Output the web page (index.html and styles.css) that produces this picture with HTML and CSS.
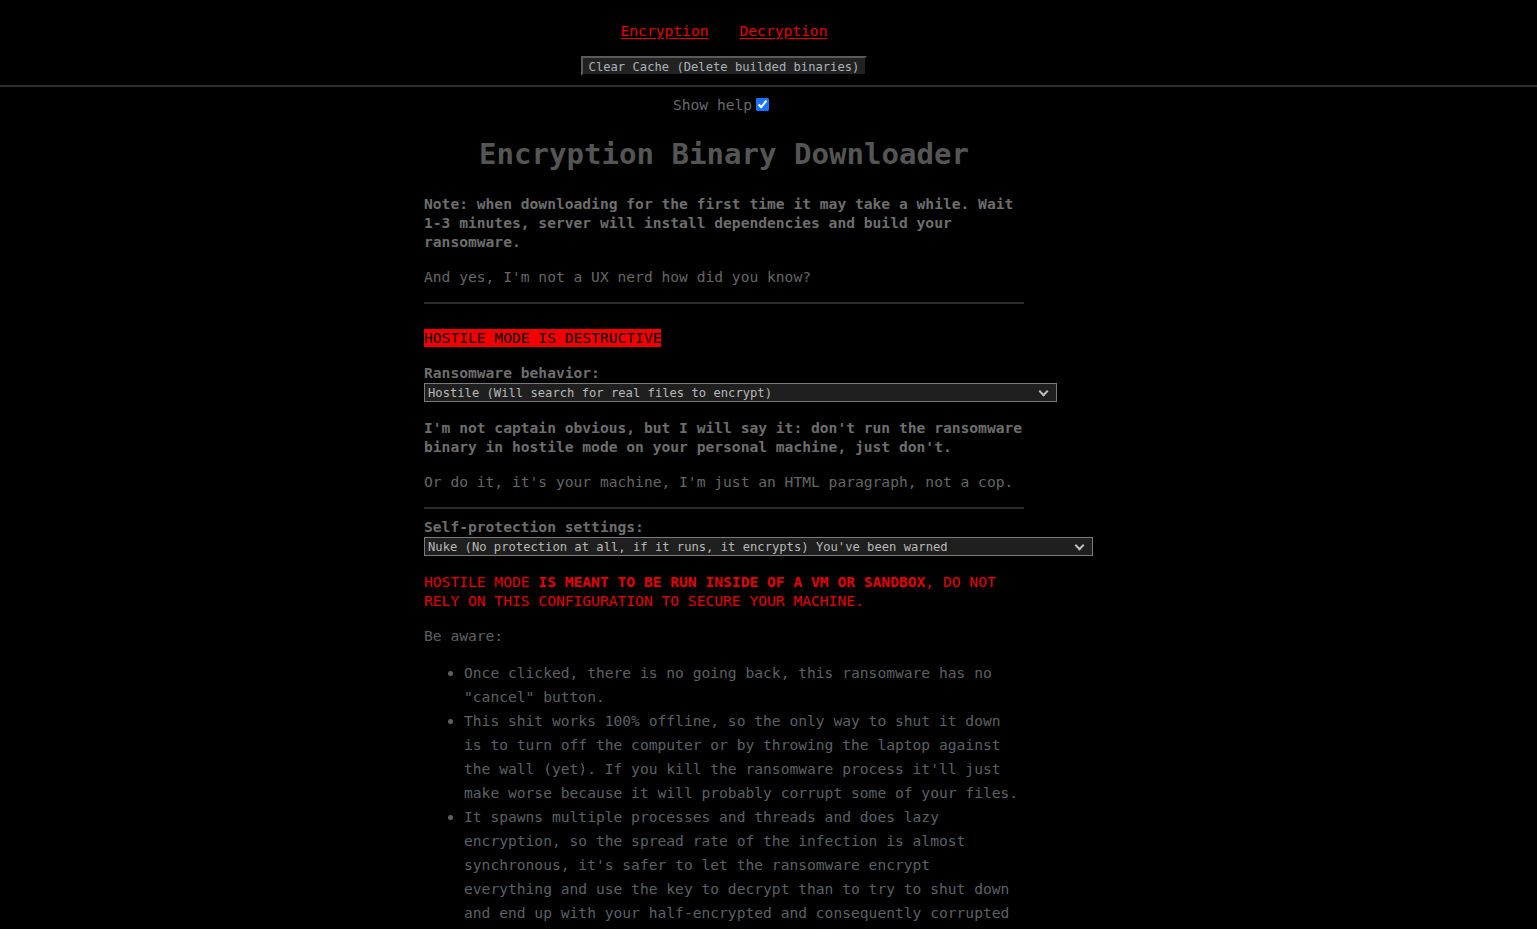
FILE: index.html
```html
<!DOCTYPE html>
<html lang="en">
<head>
<meta charset="utf-8">
<title>Encryption Binary Downloader</title>
<link rel="stylesheet" href="styles.css">
</head>
<body>
<header class="topbar">
  <div class="page">
    <nav class="nav">
      <a href="#" class="nav-link">Encryption</a>
      <a href="#" class="nav-link">Decryption</a>
    </nav>
    <div class="btn-row">
      <button class="btn" type="button">Clear Cache (Delete builded binaries)</button>
    </div>
  </div>
</header>
<div class="page">
  <div class="help-row">
    <label class="help-label">Show help<input type="checkbox" class="help-check" checked></label>
  </div>
  <h1 class="title">Encryption Binary Downloader</h1>
  <main class="content">
    <p class="strong">Note: when downloading for the first time it may take a while. Wait 1-3 minutes, server will install dependencies and build your ransomware.</p>
    <p>And yes, I'm not a UX nerd how did you know?</p>
    <hr class="rule">
    <p class="badge-row"><span class="badge">HOSTILE MODE IS DESTRUCTIVE</span></p>
    <label class="field-label">Ransomware behavior:</label>
    <div class="select-wrap sel-behavior">
      <select class="select">
        <option>Hostile (Will search for real files to encrypt)</option>
        <option>Safe (Will create a sandbox folder with dummy files to encrypt)</option>
      </select>
    </div>
    <p class="strong">I'm not captain obvious, but I will say it: don't run the ransomware binary in hostile mode on your personal machine, just don't.</p>
    <p>Or do it, it's your machine, I'm just an HTML paragraph, not a cop.</p>
    <hr class="rule rule-tight">
    <label class="field-label">Self-protection settings:</label>
    <div class="select-wrap sel-protect">
      <select class="select">
        <option>Nuke (No protection at all, if it runs, it encrypts) You've been warned</option>
      </select>
    </div>
    <p class="danger">HOSTILE MODE <b>IS MEANT TO BE RUN INSIDE OF A VM OR SANDBOX</b>, DO NOT RELY ON THIS CONFIGURATION TO SECURE YOUR MACHINE.</p>
    <p class="muted">Be aware:</p>
    <ul class="list">
      <li>Once clicked, there is no going back, this ransomware has no "cancel" button.</li>
      <li>This shit works 100% offline, so the only way to shut it down is to turn off the computer or by throwing the laptop against the wall (yet). If you kill the ransomware process it'll just make worse because it will probably corrupt some of your files.</li>
      <li>It spawns multiple processes and threads and does lazy encryption, so the spread rate of the infection is almost synchronous, it's safer to let the ransomware encrypt everything and use the key to decrypt than to try to shut down and end up with your half-encrypted and consequently corrupted files.</li>
    </ul>
  </main>
</div>
</body>
</html>
```
FILE: styles.css
```css
html, body {
  background: #000;
}
body {
  margin: 0;
  font-family: "DejaVu Sans Mono", "Liberation Mono", monospace;
  font-size: 14.62px;
  line-height: 19px;
  color: #666;
}
.page {
  width: 1448px;
}
.topbar {
  border-bottom: 2px solid #2e2e2e;
  padding-top: 21px;
  padding-bottom: 9px;
}
.nav {
  display: flex;
  justify-content: center;
  gap: 31px;
  height: 19px;
}
.nav-link {
  color: #e80000;
  text-decoration: underline;
  text-underline-offset: 2px;
}
.btn-row {
  display: flex;
  justify-content: center;
  margin-top: 16px;
}
.btn {
  font-family: "DejaVu Sans Mono", "Liberation Mono", monospace;
  font-size: 12.16px;
  line-height: 14px;
  height: 20px;
  padding: 2px 6px 0;
  color: #a9b2ba;
  background: #222;
  border: 2px outset #5a5a5a;
  border-right-color: #3a3a3a;
  border-bottom-color: #3a3a3a;
}
.help-row {
  display: flex;
  justify-content: center;
  margin-top: 8px;
}
.help-label {
  display: flex;
  align-items: center;
  color: #6a6a6a;
  line-height: 19px;
  margin-left: -6px;
}
.help-check {
  margin: 0 0 0 4px;
  width: 13px;
  height: 13px;
  accent-color: #1a73ff;
}
.title {
  text-align: center;
  font-size: 29.07px;
  line-height: 38px;
  font-weight: bold;
  color: #555;
  margin: 21px 0 21px;
}
.content {
  width: 600px;
  margin: 0 auto;
}
p {
  margin: 16px 0;
}
.content > p:first-child {
  margin-top: 0;
}
.strong {
  font-weight: bold;
  color: #6e6e6e;
}
.rule {
  border: 0;
  border-top: 2px solid #2c2c2c;
  margin: 0;
  height: 0;
}
.badge-row {
  margin: 25px 0 16px;
  line-height: 18px;
}
.badge {
  background: #f20000;
  color: #000;
  display: inline-block;
  height: 18px;
}
.rule-tight {
  margin-bottom: 8px;
}
.field-label {
  display: block;
  font-weight: bold;
  color: #6e6e6e;
  line-height: 19px;
}
.select-wrap {
  position: relative;
  display: block;
  margin-top: 1px;
}
.sel-behavior {
  width: 633px;
}
.sel-protect {
  width: 669px;
}
.select {
  display: block;
  width: 100%;
  height: 19px;
  box-sizing: border-box;
  appearance: none;
  -webkit-appearance: none;
  background: #1f1f1f;
  color: #b9b9b9;
  border: 1px solid #7a7a7a;
  border-radius: 0;
  font-family: "DejaVu Sans Mono", "Liberation Mono", monospace;
  font-size: 12.16px;
  line-height: 17px;
  padding: 1px 24px 0 3px;
  margin: 0;
}
.select-wrap::after {
  content: "";
  position: absolute;
  right: 10px;
  top: 5px;
  width: 5px;
  height: 5px;
  border-right: 2px solid #bdbdbd;
  border-bottom: 2px solid #bdbdbd;
  transform: rotate(45deg);
  pointer-events: none;
}
.danger {
  color: #e60000;
}
.danger b {
  font-weight: bold;
}
.muted {
  color: #5c6066;
}
.list {
  margin: 16px 0;
  padding-left: 40px;
  line-height: 24px;
  color: #5c6066;
}
```
